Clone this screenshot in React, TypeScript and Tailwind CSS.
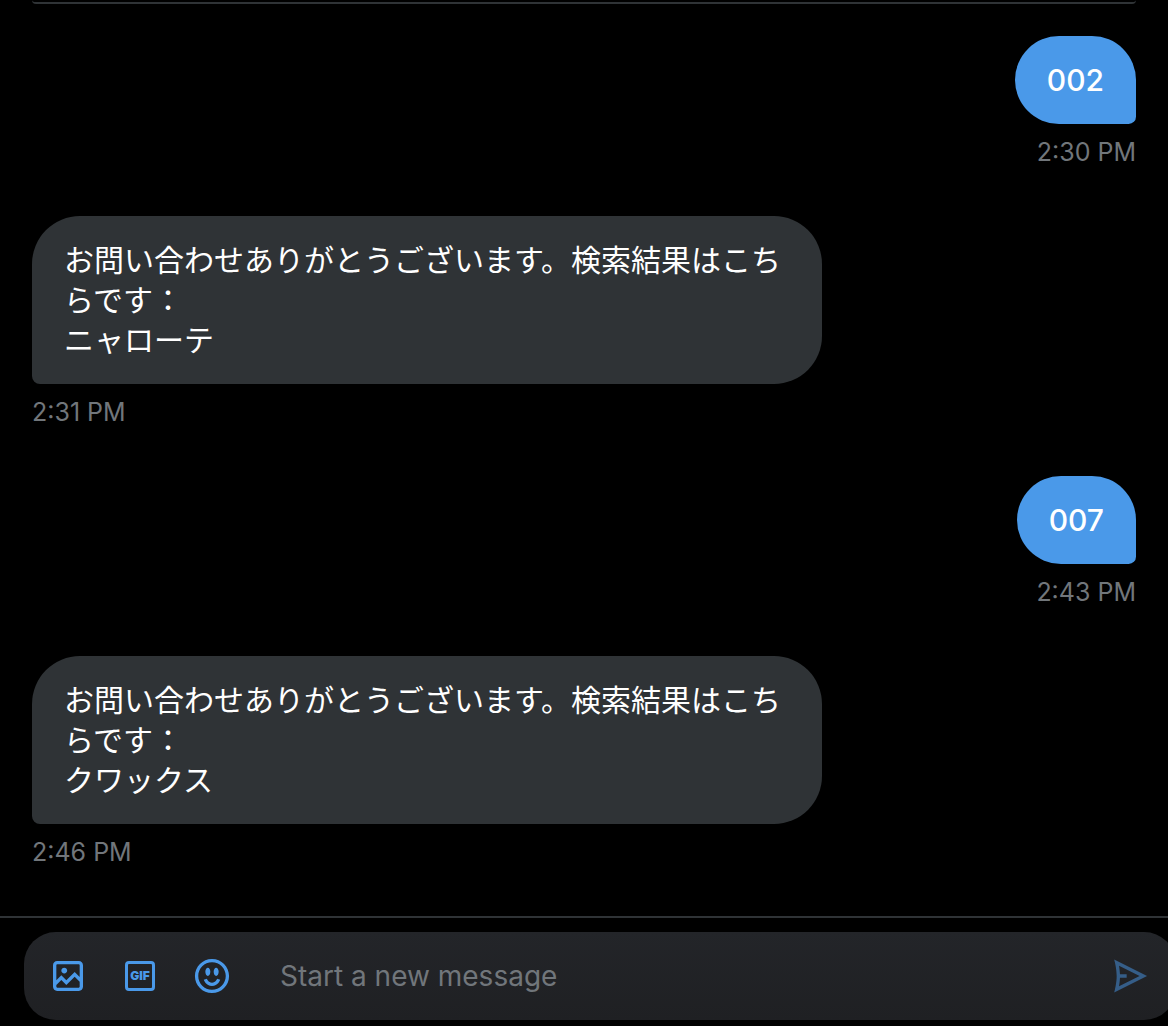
import React from "react";

type Message = { id: number; own: boolean; lines: string[]; time: string };

const messages: Message[] = [
  { id: 1, own: true, lines: ["002"], time: "2:30 PM" },
  {
    id: 2,
    own: false,
    lines: ["お問い合わせありがとうございます。検索結果はこちらです：", "ニャローテ"],
    time: "2:31 PM",
  },
  { id: 3, own: true, lines: ["007"], time: "2:43 PM" },
  {
    id: 4,
    own: false,
    lines: ["お問い合わせありがとうございます。検索結果はこちらです：", "クワックス"],
    time: "2:46 PM",
  },
];

const IMAGE_PATH =
  "M3 5.5C3 4.119 4.119 3 5.5 3h13C19.881 3 21 4.119 21 5.5v13c0 1.381-1.119 2.5-2.5 2.5h-13C4.119 21 3 19.881 3 18.5v-13zM5.5 5c-.276 0-.5.224-.5.5v9.086l3-3 3 3 5-5 3 3V5.5c0-.276-.224-.5-.5-.5h-13zM19 15.414l-3-3-5 5-3-3-3 3V18.5c0 .276.224.5.5.5h13c.276 0 .5-.224.5-.5v-3.086zM9.75 7C8.784 7 8 7.784 8 8.75s.784 1.75 1.75 1.75 1.75-.784 1.75-1.75S10.716 7 9.75 7z";
const EMOJI_PATH =
  "M8 9.5C8 8.119 8.672 7 9.5 7S11 8.119 11 9.5 10.328 12 9.5 12 8 10.881 8 9.5zm6.5 2.5c.828 0 1.5-1.119 1.5-2.5S15.328 7 14.5 7 13 8.119 13 9.5s.672 2.5 1.5 2.5zM12 16c-2.224 0-3.021-2.227-3.051-2.316l-1.897.633c.05.15 1.271 3.684 4.949 3.684s4.898-3.533 4.949-3.684l-1.896-.638c-.033.095-.83 2.322-3.053 2.322zm10.25-4.001c0 5.652-4.598 10.25-10.25 10.25S1.75 17.652 1.75 12 6.348 1.75 12 1.75 22.25 6.348 22.25 12zm-2 0c0-4.549-3.701-8.25-8.25-8.25S3.75 7.451 3.75 12s3.701 8.25 8.25 8.25 8.25-3.701 8.25-8.25z";
const SEND_PATH =
  "M2.504 21.866l.526-2.108C3.04 19.719 4 15.823 4 12s-.96-7.719-.97-7.757l-.527-2.109L22.236 12 2.504 21.866zM5.981 13c-.072 1.962-.34 3.833-.583 5.183L17.764 12 5.398 5.818c.242 1.349.51 3.221.583 5.183H10v2H5.981z";

function Icon({ path }: { path: string }) {
  return (
    <svg viewBox="0 0 24 24" className="size-10 fill-current" aria-hidden="true">
      <path d={path} />
    </svg>
  );
}

function MessageRow({ message }: { message: Message }) {
  const side = message.own ? "items-end" : "items-start";
  const bubble = message.own
    ? "rounded-br-lg bg-[#4a99e9] font-medium"
    : "rounded-bl-lg bg-[#2f3336]";
  return (
    <li className={`flex flex-col gap-3 ${side}`}>
      <div className={`max-w-[790px] rounded-[48px] px-8 py-6 text-[30px] leading-10 text-white ${bubble}`}>
        {message.lines.map((line) => (
          <p key={line} className="break-all">{line}</p>
        ))}
      </div>
      <time className="text-[25px] leading-8 text-[#71767b]">{message.time}</time>
    </li>
  );
}

export default function App() {
  return (
    <main
      lang="ja"
      className="flex min-h-screen flex-col overflow-hidden bg-black font-['Inter','Noto_Sans_CJK_JP',sans-serif]"
    >
      <section className="flex-1 px-8 pb-12">
        <div className="h-1 rounded-b-sm border-b-2 border-[#2f3336]" />
        <ul className="flex flex-col gap-12 pt-8">
          {messages.map((message) => (
            <MessageRow key={message.id} message={message} />
          ))}
        </ul>
      </section>
      <footer className="border-t-2 border-[#2f3336] pt-3.5 pb-1.5 pl-6">
        <form
          className="-mr-2 flex h-22 items-center gap-8 rounded-[32px] bg-linear-to-b from-[#232529] to-[#1f2023] pr-6.5 pl-6 text-[#4a99e9]"
          onSubmit={(event) => event.preventDefault()}
        >
          <button type="button" aria-label="Add photos or video">
            <Icon path={IMAGE_PATH} />
          </button>
          <button type="button" aria-label="Add a GIF" className="flex size-10 items-center justify-center">
            <span className="flex size-[30px] items-center justify-center rounded border-3 border-current text-[12px] leading-none font-black">
              GIF
            </span>
          </button>
          <button type="button" aria-label="Add emoji">
            <Icon path={EMOJI_PATH} />
          </button>
          <input
            type="text"
            aria-label="Start a new message"
            placeholder="Start a new message"
            className="ml-4 h-12 min-w-0 flex-1 bg-transparent text-[28px] text-white outline-none placeholder:text-[#71767b]"
          />
          <button type="submit" aria-label="Send" className="opacity-50">
            <Icon path={SEND_PATH} />
          </button>
        </form>
      </footer>
    </main>
  );
}
